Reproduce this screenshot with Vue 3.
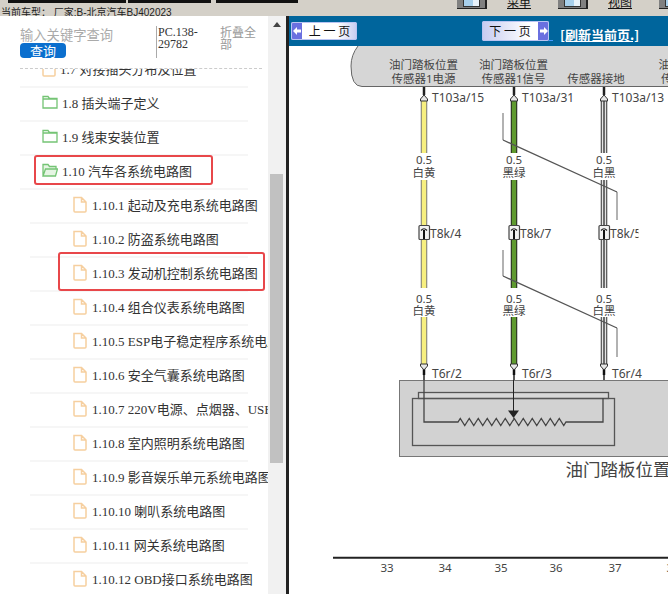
<template>
  <div class="page">
    <div class="topbar">
      <div class="tabs">
        <span class="tab tab1"></span>
        <span class="tab tab2"></span>
        <span class="tab tab3"></span>
        <div class="tools">
          <span class="tool"><i></i></span>
          <span class="tool-name">菜单</span>
          <span class="tool"><i></i></span>
          <span class="tool-name">视图</span>
          <span class="tool"><i></i></span>
        </div>
      </div>
      <div class="car">当前车型： 厂家:B-北京汽车BJ402023</div>
    </div>

    <div class="main">
      <aside class="sidebar">
        <div class="panel">
          <div class="search">
            <div class="search-box">
              <div class="placeholder">输入关键字查询</div>
              <button class="query">查询</button>
            </div>
            <div class="pc">PC.138-29782</div>
            <div class="fold">折叠全部</div>
          </div>
          <div class="tree-wrap">
            <ul class="tree">
              <li v-for="row in rows" :key="row.num" class="row" :class="{ sub: row.sub }">
                <svg v-if="row.file" class="ico" width="14" height="17" viewBox="0 0 14 17">
                  <path d="M1 1.500H8.500L13 6V15a1 1 0 0 1-1 1H2a1 1 0 0 1-1-1Z M8.500 1.500V6H13" fill="none" stroke="#f6cf9f" stroke-width="1.500" />
                </svg>
                <svg v-else class="ico" width="16" height="14" viewBox="0 0 16 14">
                  <path v-if="row.open" d="M1 13V1.500H6L7.500 3.500H14V6M1 13L3.500 6H15.500L13.500 13Z" fill="#e6f5e4" stroke="#74c474" stroke-width="1.300" />
                  <path v-else d="M1 13V1.500H6L7.500 3.500H15V13Z M1 4H15" fill="none" stroke="#74c474" stroke-width="1.300" />
                </svg>
                <span class="label">{{ row.num }} {{ row.name }}</span>
                <span v-if="row.mark" class="mark" :class="row.mark"></span>
              </li>
            </ul>
          </div>
        </div>
        <div class="scrollbar">
          <span class="arrow"></span>
          <span class="thumb"></span>
        </div>
      </aside>

      <section class="content">
        <div class="pager">
          <a class="btn prev">
            <b class="side">
              <svg width="8" height="8" viewBox="0 0 8 8"><path d="M0 4L4 0V2.500H8V5.500H4V8Z" fill="#fff" /></svg>
            </b>
            <span>上 一 页</span>
          </a>
          <a class="btn next">
            <span>下 一 页</span>
            <b class="side">
              <svg width="8" height="8" viewBox="0 0 8 8"><path d="M8 4L4 0V2.500H0V5.500H4V8Z" fill="#fff" /></svg>
            </b>
          </a>
          <a class="tiny"></a>
          <a class="refresh">[刷新当前页.]</a>
        </div>

        <svg class="diagram" width="379" height="548" viewBox="289 46 379 548">
          <path d="M358 46Q351 55 351 66Q351 86.500 362 86.500H668V46Z" fill="#d6d6d6" />
          <path d="M358 46Q351 55 351 66Q351 86.500 362 86.500H668" fill="none" stroke="#666" />

          <g class="head">
            <text x="423.500" y="69">油门踏板位置</text>
            <text x="423.500" y="83">传感器1电源</text>
            <text x="513.500" y="69">油门踏板位置</text>
            <text x="513.500" y="83">传感器1信号</text>
            <text x="596" y="83">传感器接地</text>
            <text x="693" y="69">油门踏板位置</text>
            <text x="693" y="83">传感器1信号</text>
          </g>

          <rect x="399.500" y="380.500" width="280" height="76" fill="#d2d2d2" stroke="#777" />

          <g v-for="w in wires" :key="w.x">
            <path v-for="s in segments" :key="s[0]" :d="`M${w.x} ${s[0]}V${s[1]}`" :stroke="w.edge" stroke-width="6.500" />
            <path v-for="s in segments" :key="s[0]" :d="`M${w.x} ${s[0]}V${s[1]}`" :stroke="w.core" stroke-width="4.500" />
            <template v-if="w.line">
              <path v-for="s in segments" :key="s[0]" :d="`M${w.x} ${s[0]}V${s[1]}`" :stroke="w.line" stroke-width="1.500" />
            </template>
            <path :d="`M${w.x} 87V95`" stroke="#222" stroke-width="2.500" />
            <path :d="`M${w.x - 3.5} 99L${w.x} 95L${w.x + 3.5} 99V101H${w.x - 3.5}Z`" fill="#e8e8e8" stroke="#333" />
            <path :d="`M${w.x} 368V380`" stroke="#222" stroke-width="1.500" />
            <path :d="`M${w.x} 368V375`" stroke="#111" stroke-width="2.500" />
            <path :d="`M${w.x - 3.5} 364H${w.x + 3.5}V366L${w.x} 370L${w.x - 3.5} 366Z`" fill="#e8e8e8" stroke="#333" />
            <rect :x="w.x - 5" y="225.500" width="10.500" height="14" rx="1" fill="#f2f2f2" stroke="#444" stroke-width="1.200" />
            <path :d="`M${w.x - 3} 230.500Q${w.x} 227 ${w.x + 3} 230.500`" fill="none" stroke="#222" stroke-width="1.200" />
            <path :d="`M${w.x} 230V239`" stroke="#111" stroke-width="2" />
            <text class="code" :x="w.x + 8" y="102">{{ w.top }}</text>
            <text class="code" :x="w.x + 6" y="238">{{ w.mid }}</text>
            <text class="code" :x="w.x + 8" y="378">{{ w.bottom }}</text>
            <text class="size" :x="w.x" y="164">0.5</text>
            <text class="size" :x="w.x" y="177">{{ w.color }}</text>
            <text class="size" :x="w.x" y="303">0.5</text>
            <text class="size" :x="w.x" y="315">{{ w.color }}</text>
          </g>
          <rect x="638.500" y="225" width="10" height="16" fill="#fff" />

          <g fill="none">
            <path d="M503 113V140M617 192V220M503 250V276M617 328V357" stroke="#999" stroke-width="1.500" />
            <path d="M503 140L617 192M503 276L617 328" stroke="#555" stroke-width="1.300" />
          </g>

          <rect x="418.500" y="392.500" width="190" height="6" fill="#d8d8d8" stroke="#555" stroke-width="1.300" />
          <rect x="412.500" y="398.500" width="202" height="47" fill="none" stroke="#555" stroke-width="1.300" />
          <path :d="resistor" fill="none" stroke="#444" stroke-width="1.300" />
          <path d="M513.500 380V411" stroke="#222" />
          <path d="M508 410.500H519L513.500 418Z" fill="#222" />
          <path d="M513.500 418V421" stroke="#555" />

          <text class="title" x="565.500" y="476">油门踏板位置</text>

          <path d="M333 557.800H668" stroke="#222" stroke-width="2" />
          <text v-for="t in ticks" :key="t.n" class="tick" :x="t.x" y="572">{{ t.n }}</text>
        </svg>
      </section>
    </div>
  </div>
</template>

<script setup>
const subNames = [
  '起动及充电系统电路图',
  '防盗系统电路图',
  '发动机控制系统电路图',
  '组合仪表系统电路图',
  'ESP电子稳定程序系统电路图',
  '安全气囊系统电路图',
  '220V电源、点烟器、USB接口电路图',
  '室内照明系统电路图',
  '影音娱乐单元系统电路图',
  '喇叭系统电路图',
  '网关系统电路图',
  'OBD接口系统电路图'
]

const rows = [
  { num: '1.7', name: '对接插头分布及位置', file: true },
  { num: '1.8', name: '插头端子定义' },
  { num: '1.9', name: '线束安装位置' },
  { num: '1.10', name: '汽车各系统电路图', open: true, mark: 'mark-top' },
  ...subNames.map((name, i) => ({
    num: `1.10.${i + 1}`,
    name,
    sub: true,
    file: true,
    mark: i === 2 ? 'mark-sub' : null
  }))
]

const wires = [
  { x: 424, edge: '#777', core: '#f7ef80', top: 'T103a/15', mid: 'T8k/4', bottom: 'T6r/2', color: '白黄' },
  { x: 514, edge: '#222', core: '#5f9a2f', top: 'T103a/31', mid: 'T8k/7', bottom: 'T6r/3', color: '黑绿' },
  { x: 604, edge: '#333', core: '#e4e4e4', line: '#444', top: 'T103a/13', mid: 'T8k/5', bottom: 'T6r/4', color: '白黑' }
]
const segments = [[100, 153], [180, 288], [317, 364]]

const ticks = [
  { n: 33, x: 387 },
  { n: 34, x: 445 },
  { n: 35, x: 501 },
  { n: 36, x: 556 },
  { n: 37, x: 615 },
  { n: 38, x: 673 }
]

// wiper track: the two side legs plus the zigzag between them
let zig = 'M424 380V422H458'
for (let i = 0; i < 12; i++) {
  const x = 458 + i * 9
  zig += `L${x + 2.25} 418.5L${x + 6.75} 425.5L${x + 9} 422`
}
const resistor = zig + 'H603V398'
</script>

<style scoped>
.page {
  width: 668px;
  height: 594px;
  display: flex;
  flex-direction: column;
  overflow: hidden;
  background: #d4d0c8;
  font-family: "Liberation Serif", "Noto Sans CJK SC", serif;
}

.topbar {
  height: 16px;
  overflow: hidden;
  flex: none;
}

.tabs {
  display: flex;
  height: 9px;
  align-items: flex-start;
}

.tab {
  height: 3px;
  background: #111;
  flex: none;
}

.tab1 {
  width: 118px;
  margin-left: 8px;
}

.tab2 {
  width: 83px;
  margin-left: 2px;
}

.tab3 {
  width: 82px;
  margin-left: 5px;
}

.tools {
  display: flex;
  align-items: flex-start;
  height: 9px;
  margin-left: 159px;
  flex: none;
}

.tool {
  width: 30px;
  height: 9px;
  background: #808080;
  border-right: 2px solid #222;
  border-bottom: 1px solid #222;
  box-sizing: border-box;
  padding: 0 5px 0 6px;
  flex: none;
}

.tool i {
  display: block;
  height: 6px;
  background: linear-gradient(90deg, #a8d0ec 60%, #e8f2fa 60%);
  border: 1px solid #333;
  border-top: 0;
}

.tool-name {
  width: 71px;
  height: 9px;
  box-sizing: border-box;
  padding-left: 20px;
  font: 12px/6px "Liberation Sans", "Noto Sans CJK SC", sans-serif;
  text-decoration: underline;
  color: #111;
  overflow: hidden;
  flex: none;
}

.car {
  font: 10px/7px "Liberation Sans", "Noto Sans CJK SC", sans-serif;
  color: #222;
  padding-left: 1px;
  white-space: nowrap;
}

.main {
  flex: 1;
  display: flex;
  min-height: 0;
}

.sidebar {
  width: 286px;
  flex: none;
  display: flex;
  background: #fff;
  border-right: 3px solid #222;
  box-sizing: content-box;
}

.panel {
  width: 268px;
  flex: none;
  overflow: hidden;
  display: flex;
  flex-direction: column;
}

.search {
  height: 43px;
  flex: none;
  margin: 0 6px 0 20px;
  padding-top: 9px;
  box-sizing: content-box;
  display: flex;
  align-items: flex-start;
  border-bottom: 1px dashed #ccc;
}

.search-box {
  width: 136px;
  flex: none;
}

.placeholder {
  height: 18px;
  font-size: 13.300px;
  line-height: 22px;
  color: #aaa;
  white-space: nowrap;
}

.query {
  display: block;
  width: 46px;
  height: 15px;
  padding: 0;
  border: 0;
  border-radius: 4px;
  background: #0b6fce;
  color: #fff;
  font: 13px/15px "Noto Sans CJK SC", sans-serif;
}

.pc {
  width: 42px;
  height: 32px;
  margin-top: 1px;
  flex: none;
  padding-left: 1px;
  border-left: 1px solid #aaa;
  font-size: 12px;
  line-height: 12px;
  color: #333;
  word-break: break-word;
}

.fold {
  width: 38px;
  margin: 2px 0 0 20px;
  flex: none;
  font-size: 12px;
  line-height: 12px;
  color: #999;
}

.tree-wrap {
  flex: 1;
  min-height: 0;
  overflow: hidden;
}

.tree {
  list-style: none;
  margin: -15px 0 0;
  padding: 0;
}

.row {
  position: relative;
  height: 34px;
  width: 228px;
  margin-left: 20px;
  box-sizing: border-box;
  padding: 0 0 4px 22px;
  display: flex;
  align-items: center;
  gap: 4px;
  border-bottom: 2px solid #f6f6f6;
  white-space: nowrap;
  font-size: 13px;
  color: #333;
}

.row.sub {
  margin-left: 30px;
  width: 218px;
  padding-left: 43px;
  gap: 5px;
}

.ico {
  flex: none;
}

.mark {
  position: absolute;
  border: 2px solid #e8474a;
  border-radius: 3px;
  box-sizing: border-box;
}

.mark-top {
  left: 14px;
  top: -1px;
  width: 179px;
  height: 30px;
}

.mark-sub {
  left: 28px;
  top: -6px;
  width: 207px;
  height: 39px;
}

.scrollbar {
  width: 18px;
  flex: none;
  position: relative;
  background: #f1f1f1;
}

.arrow {
  position: absolute;
  left: 5px;
  top: 6px;
  border: 4px solid transparent;
  border-top: 0;
  border-bottom: 5px solid #444;
}

.thumb {
  position: absolute;
  left: 2px;
  top: 158px;
  width: 13px;
  height: 289px;
  background: #c1c1c1;
}

.content {
  flex: 1;
  min-width: 0;
  display: flex;
  flex-direction: column;
  background: #fff;
}

.pager {
  height: 30px;
  flex: none;
  background: #00659c;
  display: flex;
  align-items: center;
  padding-left: 2px;
  box-sizing: border-box;
  overflow: hidden;
}

.btn {
  display: flex;
  align-items: center;
  height: 18px;
  border-radius: 2px;
  outline: 1px solid #b9c4f2;
  outline-offset: -1px;
  font: 12px/18px "Noto Sans CJK SC", sans-serif;
  color: #111;
  flex: none;
  overflow: hidden;
}

.btn span {
  flex: 1;
  text-align: center;
}

.side {
  width: 11px;
  height: 100%;
  display: flex;
  align-items: center;
  justify-content: center;
  background: #6a70e0;
  flex: none;
}

.prev {
  width: 66px;
  background: linear-gradient(90deg, #fff 70%, #c6cbf0);
}

.next {
  width: 67px;
  height: 20px;
  margin-left: 125px;
  background: linear-gradient(90deg, #c6cbf0, #fff 70%);
}

.tiny {
  width: 4px;
  height: 1px;
  background: #49f;
  margin-top: 19px;
  flex: none;
}

.refresh {
  margin-left: 7px;
  margin-top: 8px;
  color: #fff;
  font: bold 13px/16px "Noto Sans CJK SC", sans-serif;
  text-decoration: underline;
  white-space: nowrap;
}

.diagram {
  display: block;
  flex: none;
}

.diagram text {
  font-family: "Noto Sans", "Noto Sans CJK SC", sans-serif;
  fill: #444;
}

.head text,
.size {
  font-size: 11.500px;
  text-anchor: middle;
}

.code {
  font-size: 12px;
}

.title {
  font-size: 17.500px;
}

.tick {
  font-size: 11.500px;
  text-anchor: middle;
}
</style>

<style>
html,
body {
  margin: 0;
  overflow: hidden;
}
</style>
